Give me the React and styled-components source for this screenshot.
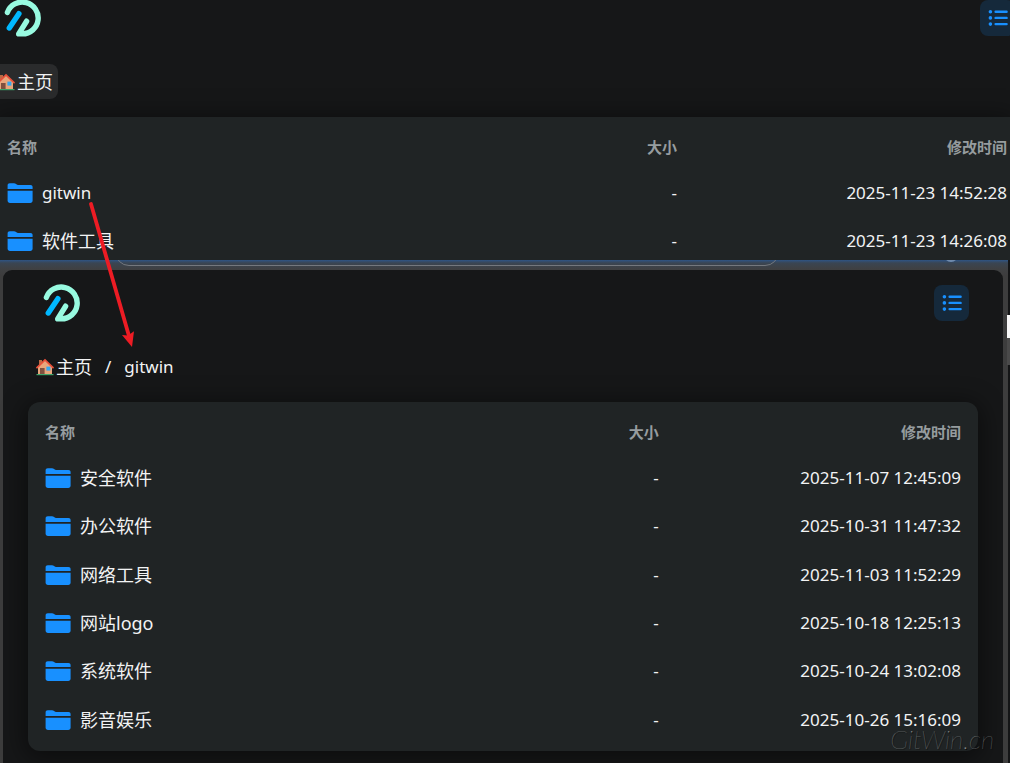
import React from 'react';
import styled, { createGlobalStyle } from 'styled-components';

const GlobalStyle = createGlobalStyle`
  * { box-sizing: border-box; }
  body {
    margin: 0;
    background: #161718;
    color: #f2f3f4;
    font-family: "Noto Sans", "Noto Sans CJK SC", sans-serif;
    font-size: 17px;
    line-height: 24px;
  }
`;

const Page = styled.div`
  position: relative;
  display: flex;
  flex-direction: column;
  min-height: 100vh;
  overflow: hidden;
`;

const Pane = styled.main`
  display: flex;
  flex-direction: column;
  background: #161718;
`;

const FrontPane = styled(Pane)`
  flex: 1;
  padding: 15px 25px 12px;
  border-radius: 9px 9px 0 0;
`;

const Backdrop = styled.div`
  position: relative;
  display: flex;
  flex: 1;
  flex-direction: column;
  margin-top: -5px;
  padding: 10px 5px 0 3px;
  border-right: 2px solid #141516;
  background: linear-gradient(#2f5484 0, #3a4552 3px, #3f4042 9px, #3d3d3d 16px);
  overflow: hidden;
`;

const InputEdge = styled.div`
  position: absolute;
  top: -24px;
  left: 115px;
  right: 229px;
  height: 30px;
  border: 1px solid #74787e;
  border-radius: 14px;
`;

const KnobEdge = styled.div`
  position: absolute;
  top: -12px;
  right: 50px;
  width: 14px;
  height: 14px;
  border-radius: 7px;
  background: #6f8bae;
`;

const ScrollThumb = styled.div`
  position: absolute;
  top: 315px;
  right: 0;
  width: 3px;
  height: 50px;
  background: linear-gradient(#f8f8f8 23px, #4a4a4a 23px);
`;

const Header = styled.header`
  display: flex;
  justify-content: space-between;
  height: 36px;
  padding: ${(p) => (p.$flush ? '0 0 0 4px' : '0 9px 0 15px')};
  margin-right: ${(p) => (p.$flush ? '-5px' : '0')};
`;

const LogoMark = styled.svg`
  display: block;
  width: 38px;
  height: 38px;
  margin-top: -1px;
`;

const ViewButton = styled.button`
  width: 35px;
  height: 36px;
  padding: 0;
  border: 0;
  border-radius: 8px;
  background: #15293b;
  color: #1890ff;
  svg { display: block; }
`;

const Crumbs = styled.nav`
  display: flex;
  align-items: center;
  height: 35px;
  margin: 28px 0 18px;
  padding-left: ${(p) => (p.$flush ? '0' : '3px')};
`;

const Crumb = styled.a`
  display: flex;
  align-items: center;
  gap: 2px;
  height: 35px;
  padding: 0 5px;
  margin-left: ${(p) => (p.$active ? '-8px' : '0')};
  border-radius: 8px;
  background: ${(p) => (p.$active ? '#2a2b2c' : 'transparent')};
  color: inherit;
  font-size: ${(p) => (p.$latin ? '17px' : '18px')};
  text-decoration: none;
`;

const Slash = styled.span`
  padding: 0 8px;
`;

const Card = styled.section`
  display: flex;
  flex-direction: column;
  flex: 1;
  padding: ${(p) => (p.$flush ? '0 3px 0 7px' : '0 17px 7px')};
  border-radius: ${(p) => (p.$flush ? '0' : '12px')};
  background: #202425;
  box-shadow: 0 4px 24px 4px rgba(0, 0, 0, 0.45);
`;

const FileTable = styled.table`
  display: flex;
  flex-direction: column;
  flex: 1;
`;

const TableHead = styled.thead`
  display: block;
  color: #969c9f;
  font-size: 15px;
`;

const TableBody = styled.tbody`
  display: grid;
  flex: 1;
  grid-auto-rows: minmax(48px, 1fr);
`;

const Row = styled.tr`
  display: grid;
  grid-template-columns: 50% 17% 33%;
  align-items: center;
`;

const HeadRow = styled(Row)`
  height: 52px;
  padding-top: 8px;
`;

const HeadCell = styled.th`
  padding: 0;
  font-weight: 700;
  text-align: ${(p) => (p.$end ? 'right' : 'left')};
`;

const Cell = styled.td`
  padding: 0;
  text-align: ${(p) => (p.$end ? 'right' : 'left')};
  white-space: nowrap;
`;

const FileLink = styled.a`
  display: flex;
  align-items: center;
  gap: 9px;
  color: inherit;
  font-size: ${(p) => (p.$latin ? '17px' : '18px')};
  text-decoration: none;
`;

const Arrow = styled.svg`
  position: absolute;
  top: 198px;
  left: 84px;
  width: 56px;
  height: 152px;
  pointer-events: none;
`;

const Watermark = styled.div`
  position: absolute;
  right: 16px;
  bottom: 9px;
  color: #8a8d8e;
  font-family: Lato, sans-serif;
  font-size: 26px;
  font-style: italic;
  font-weight: 100;
  line-height: 30px;
  text-shadow: 1px 1px 0 #0b0c0c;
  pointer-events: none;
`;

function Logo() {
  return (
    <LogoMark viewBox="0 0 38 38" fill="none" strokeWidth="5.4" strokeLinecap="round" strokeLinejoin="round" role="img" aria-label="Logo">
      <path d="M3.4 13.4A15.9 15.9 0 1 1 18.300 34.9H14.7L22.6 22.2" stroke="#98fae0" />
      <path d="M14.9 14.7L5.3 29" stroke="#00b8ff" />
    </LogoMark>
  );
}

function ListIcon() {
  return (
    <svg width="35" height="36" viewBox="0 0 35 36" fill="none" stroke="currentColor" strokeLinecap="round" aria-hidden="true">
      <path d="M10.4 11.7h.01M10.4 17.9h.01M10.4 24.1h.01" strokeWidth="3.6" />
      <path d="M15.6 11.7h11M15.6 17.9h11M15.6 24.1h11" strokeWidth="2.4" />
    </svg>
  );
}

function HouseIcon() {
  return (
    <svg width="18" height="18" viewBox="0 0 18 18" aria-hidden="true">
      <path d="M3 2h3v5H3z" fill="#bd6b45" />
      <path d="M2 9l7-7 7 7v7.5H2z" fill="#e8a67c" />
      <path d="M4 10h4.6v6.5H4z" fill="#80503f" />
      <path d="M10.4 8.6h4v4h-4z" fill="#35a7ee" />
      <path d="M1 9.6L9 1.9l8 7.7" fill="none" stroke="#e8503a" strokeWidth="1.8" strokeLinecap="round" />
      <path d="M.5 16.6h17" stroke="#3fa66b" strokeWidth="1.2" />
    </svg>
  );
}

function FolderIcon() {
  return (
    <svg width="26" height="20" viewBox="0 0 26 20" fill="#1890ff" aria-hidden="true">
      <path d="M.6 6V2.4C.6 1 1.4.2 2.8.2H7c1.5 0 2.7 1.7 4.2 1.7h12.2c1.4 0 2.2.8 2.2 2.2V6z" />
      <path d="M.6 7.7h25v9.8c0 1.5-.9 2.400-2.400 2.400H3c-1.500 0-2.400-.9-2.400-2.400z" />
    </svg>
  );
}

function PaneHeader({ flush }) {
  return (
    <Header $flush={flush}>
      <Logo />
      <ViewButton type="button" aria-label="列表视图"><ListIcon /></ViewButton>
    </Header>
  );
}

function Files({ files, flush }) {
  return (
    <Card $flush={flush}>
      <FileTable>
        <TableHead>
          <HeadRow>
            <HeadCell scope="col">名称</HeadCell>
            <HeadCell scope="col" $end>大小</HeadCell>
            <HeadCell scope="col" $end>修改时间</HeadCell>
          </HeadRow>
        </TableHead>
        <TableBody>
          {files.map(([name, time]) => (
            <Row key={name}>
              <Cell>
                <FileLink href="#" $latin={/^[a-z]+$/.test(name)}>
                  <FolderIcon />
                  {name}
                </FileLink>
              </Cell>
              <Cell $end>-</Cell>
              <Cell $end>{time}</Cell>
            </Row>
          ))}
        </TableBody>
      </FileTable>
    </Card>
  );
}

const rootFiles = [
  ['gitwin', '2025-11-23 14:52:28'],
  ['软件工具', '2025-11-23 14:26:08'],
];

const gitwinFiles = [
  ['安全软件', '2025-11-07 12:45:09'],
  ['办公软件', '2025-10-31 11:47:32'],
  ['网络工具', '2025-11-03 11:52:29'],
  ['网站logo', '2025-10-18 12:25:13'],
  ['系统软件', '2025-10-24 13:02:08'],
  ['影音娱乐', '2025-10-26 15:16:09'],
];

export default function App() {
  return (
    <>
      <GlobalStyle />
      <Page>
        <Pane as="section">
          <PaneHeader flush />
          <Crumbs $flush>
            <Crumb href="#" $active><HouseIcon />主页</Crumb>
          </Crumbs>
          <Files flush files={rootFiles} />
        </Pane>
        <Backdrop>
          <InputEdge />
          <KnobEdge />
          <FrontPane>
            <PaneHeader />
            <Crumbs>
              <Crumb href="#"><HouseIcon />主页</Crumb>
              <Slash>/</Slash>
              <Crumb href="#" $latin>gitwin</Crumb>
            </Crumbs>
            <Files files={gitwinFiles} />
          </FrontPane>
        </Backdrop>
        <ScrollThumb />
        <Arrow viewBox="84 198 56 152" aria-hidden="true">
          <path d="M91 204L129 336" stroke="#ed1c24" strokeWidth="3.8" strokeLinecap="round" />
          <path d="M132 347L122 335L128 335.5L134 331.3z" fill="#ed1c24" />
        </Arrow>
        <Watermark>GitWin.cn</Watermark>
      </Page>
    </>
  );
}
